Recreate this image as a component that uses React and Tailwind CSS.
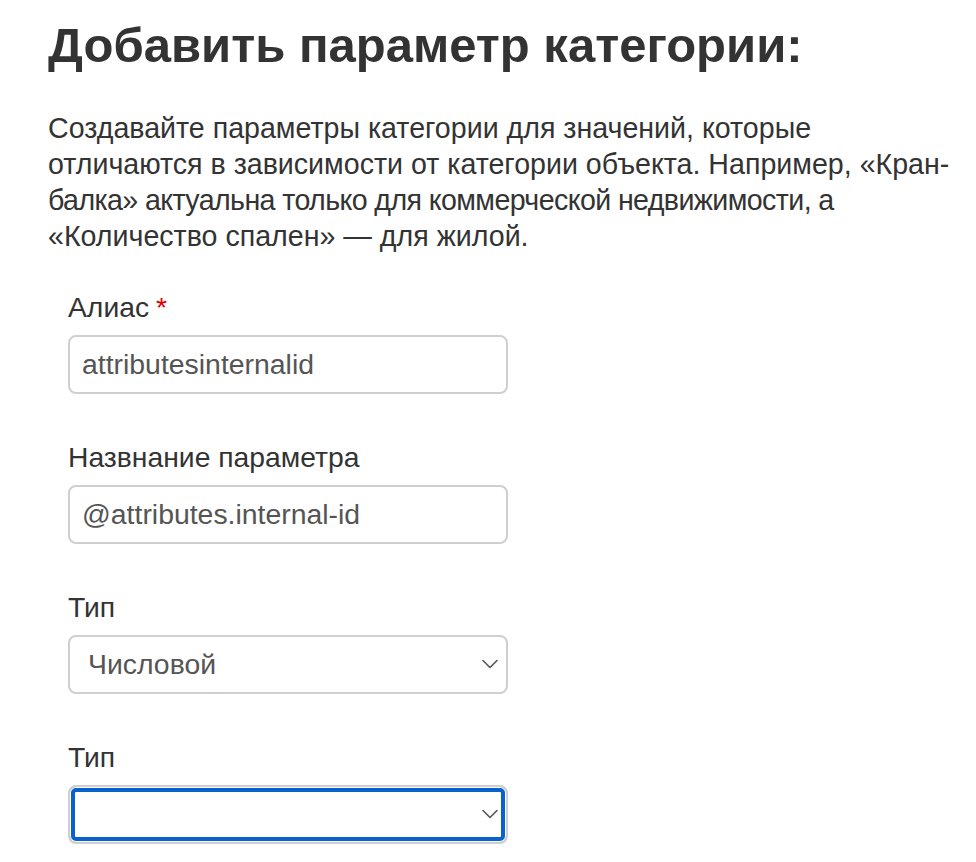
import React from 'react';

const font = { fontFamily: '"Liberation Sans", Arial, sans-serif' };

function Chevron() {
    return (
        <svg className="pointer-events-none absolute right-[10px] top-1/2 -translate-y-1/2" width="16" height="10" viewBox="0 0 16 10" fill="none">
            <path d="M1 1.5 L8 8.5 L15 1.5" stroke="#555" strokeWidth="1.6" strokeLinecap="round" strokeLinejoin="round" />
        </svg>
    );
}

function Field({ label, required, children }) {
    return (
        <div className="flex flex-col">
            <label className="text-[28.3px] leading-[36px] text-[#333]">
                {label}
                {required && <span className="ml-[7px] text-[#e00000]">*</span>}
            </label>
            <div className="mt-[10px]">{children}</div>
        </div>
    );
}

function TextInput({ value }) {
    return (
        <input
            readOnly
            defaultValue={value}
            className="block h-[59px] w-[440px] rounded-[8px] border-2 border-[#cfcfcf] bg-white px-[12px] text-[28.4px] text-[#555] outline-none"
            style={font}
        />
    );
}

function Select({ value, focused }) {
    return (
        <div className="relative w-[440px]">
            <select
                defaultValue={value}
                className={`block h-[59px] w-full appearance-none rounded-[8px] border-2 border-[#cfcfcf] bg-white pl-[18px] pr-[40px] text-[28.4px] text-[#555] outline-none
                    ${focused ? 'shadow-[inset_0_0_0_1px_#fff,inset_0_0_0_5px_#0a60cc]' : ''}`}
                style={font}
            >
                <option value="">{''}</option>
                <option value="num">Числовой</option>
                <option value="str">Строковый</option>
            </select>
            <Chevron />
        </div>
    );
}

export default function App() {
    return (
        <div className="min-h-screen bg-white pl-12 pt-[19px] text-[#333]" style={font}>
            <h1 className="text-[49px] font-bold leading-[1.1] text-[#333]">
                Добавить параметр категории:
            </h1>

            <p className="mt-[37px] whitespace-nowrap text-[28.6px] leading-[36px] text-[#333]">
                Создавайте параметры категории для значений, которые<br />
                отличаются в зависимости от категории объекта. Например, «Кран-<br />
                <span className="tracking-[-0.6px]">балка» актуальна только для коммерческой недвижимости, а</span><br />
                «Количество спален» — для жилой.
            </p>

            {/* form block sits a little indented */}
            <div className="mt-[35px] flex flex-col gap-[45px] pl-[20px]">
                <Field label="Алиас" required>
                    <TextInput value="attributesinternalid" />
                </Field>
                <Field label="Назвнание параметра">
                    <TextInput value="@attributes.internal-id" />
                </Field>
                <Field label="Тип">
                    <Select value="num" />
                </Field>
                <Field label="Тип">
                    <Select value="" focused />
                </Field>
            </div>
        </div>
    );
}
